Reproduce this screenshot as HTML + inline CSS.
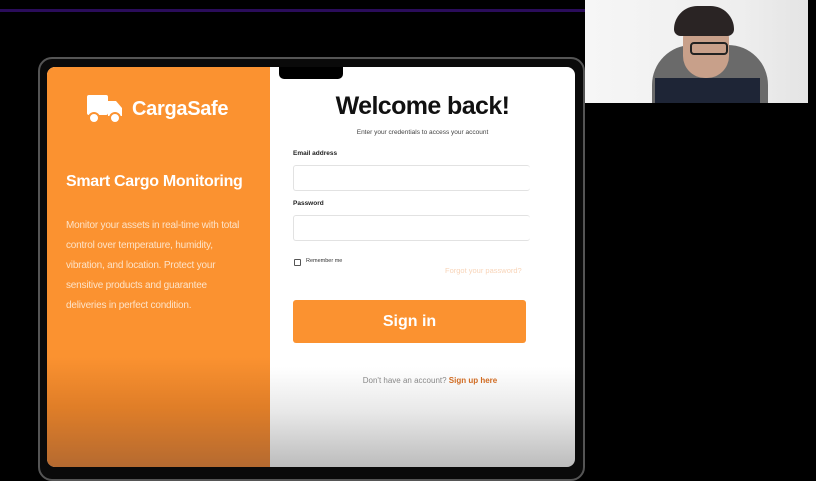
<!DOCTYPE html>
<html><head><style>
body{margin:0;width:816px;height:455px;background:#000;position:relative;overflow:hidden;font-family:"Liberation Sans",sans-serif}
.a{position:absolute}
</style></head><body>
<div class="a" style="left:0;top:9px;width:585px;height:3px;background:#2a0c5a"></div>
<div class="a" style="left:585px;top:0;width:223px;height:103px;background:linear-gradient(90deg,#f6f6f6,#eee 70%,#e4e4e4)"></div>
<div class="a" style="left:652px;top:45px;width:116px;height:58px;background:#6a6a6a;border-radius:40px 40px 0 0"></div>
<div class="a" style="left:655px;top:78px;width:105px;height:25px;background:#1e2536"></div>
<div class="a" style="left:683px;top:16px;width:46px;height:62px;background:#c8a08a;border-radius:22px"></div>
<div class="a" style="left:674px;top:6px;width:60px;height:30px;background:#2a2424;border-radius:28px 28px 8px 8px"></div>
<div class="a" style="left:690px;top:42px;width:34px;height:9px;border:2px solid #222;border-radius:4px"></div>
<div class="a" style="left:38px;top:57px;width:543px;height:420px;border:2px solid #555;border-radius:14px;background:#0a0a0a"></div>
<div class="a" style="left:47px;top:67px;width:528px;height:400px;border-radius:8px;overflow:hidden;background:linear-gradient(#fff 0,#fff 300px,#e8e8e8 345px,#bcbcbc 400px)">
 <div class="a" style="left:0;top:0;width:223px;height:400px;background:linear-gradient(#fb9230 0,#fb9230 290px,#e07e28 340px,#b56a30 400px)"></div>
 <svg class="a" style="left:39px;top:26px" width="38" height="32" viewBox="0 0 38 32"><rect x="1" y="2" width="21" height="20" rx="2" fill="#fff"/><path d="M22 8h8l6 7v8H22z" fill="#fff"/><circle cx="8" cy="25" r="5" fill="#fff" stroke="#fb9230" stroke-width="2"/><circle cx="29" cy="25" r="5" fill="#fff" stroke="#fb9230" stroke-width="2"/></svg>
 <div class="a" style="left:85px;top:31px;color:#fff;font-size:20px;font-weight:bold;letter-spacing:-0.3px">CargaSafe</div>
 <div class="a" style="left:19px;top:106px;color:#fff;font-size:16px;font-weight:bold;letter-spacing:-0.3px">Smart Cargo Monitoring</div>
 <div class="a" style="left:19px;top:149px;white-space:nowrap;color:#fde3c8;font-size:10px;letter-spacing:-0.2px;line-height:20px">Monitor your assets in real-time with total<br>control over temperature, humidity,<br>vibration, and location. Protect your<br>sensitive products and guarantee<br>deliveries in perfect condition.</div>
 <div class="a" style="left:232px;top:0;width:64px;height:12px;background:#000;border-radius:0 0 5px 5px"></div>
 <div class="a" style="left:223px;top:25px;width:305px;text-align:center;font-size:25px;font-weight:bold;color:#111;letter-spacing:-0.6px">Welcome back!</div>
 <div class="a" style="left:223px;top:62px;width:305px;text-align:center;font-size:6.5px;color:#444">Enter your credentials to access your account</div>
 <div class="a" style="left:246px;top:83px;font-size:6.5px;color:#222;font-weight:bold">Email address</div>
 <div class="a" style="left:246px;top:98px;width:236px;height:24px;border:1px solid #e2e2e2;border-right:none;border-radius:3px"></div>
 <div class="a" style="left:246px;top:133px;font-size:6.5px;color:#222;font-weight:bold">Password</div>
 <div class="a" style="left:246px;top:148px;width:236px;height:24px;border:1px solid #e2e2e2;border-right:none;border-radius:3px"></div>
 <div class="a" style="left:247px;top:192px;width:5px;height:5px;border:1px solid #555;border-radius:1px"></div>
 <div class="a" style="left:259px;top:191px;font-size:5.5px;color:#333">Remember me</div>
 <div class="a" style="left:398px;top:199px;font-size:7.5px;color:#f8d4b8">Forgot your password?</div>
 <div class="a" style="left:246px;top:233px;width:233px;height:43px;background:#fb9230;border-radius:3px;color:#fff;font-size:16px;font-weight:bold;text-align:center;line-height:43px">Sign in</div>
 <div class="a" style="left:223px;top:309px;width:320px;text-align:center;font-size:8px;color:#888">Don't have an account? <b style="color:#d06a20">Sign up here</b></div>
</div>
</body></html>
